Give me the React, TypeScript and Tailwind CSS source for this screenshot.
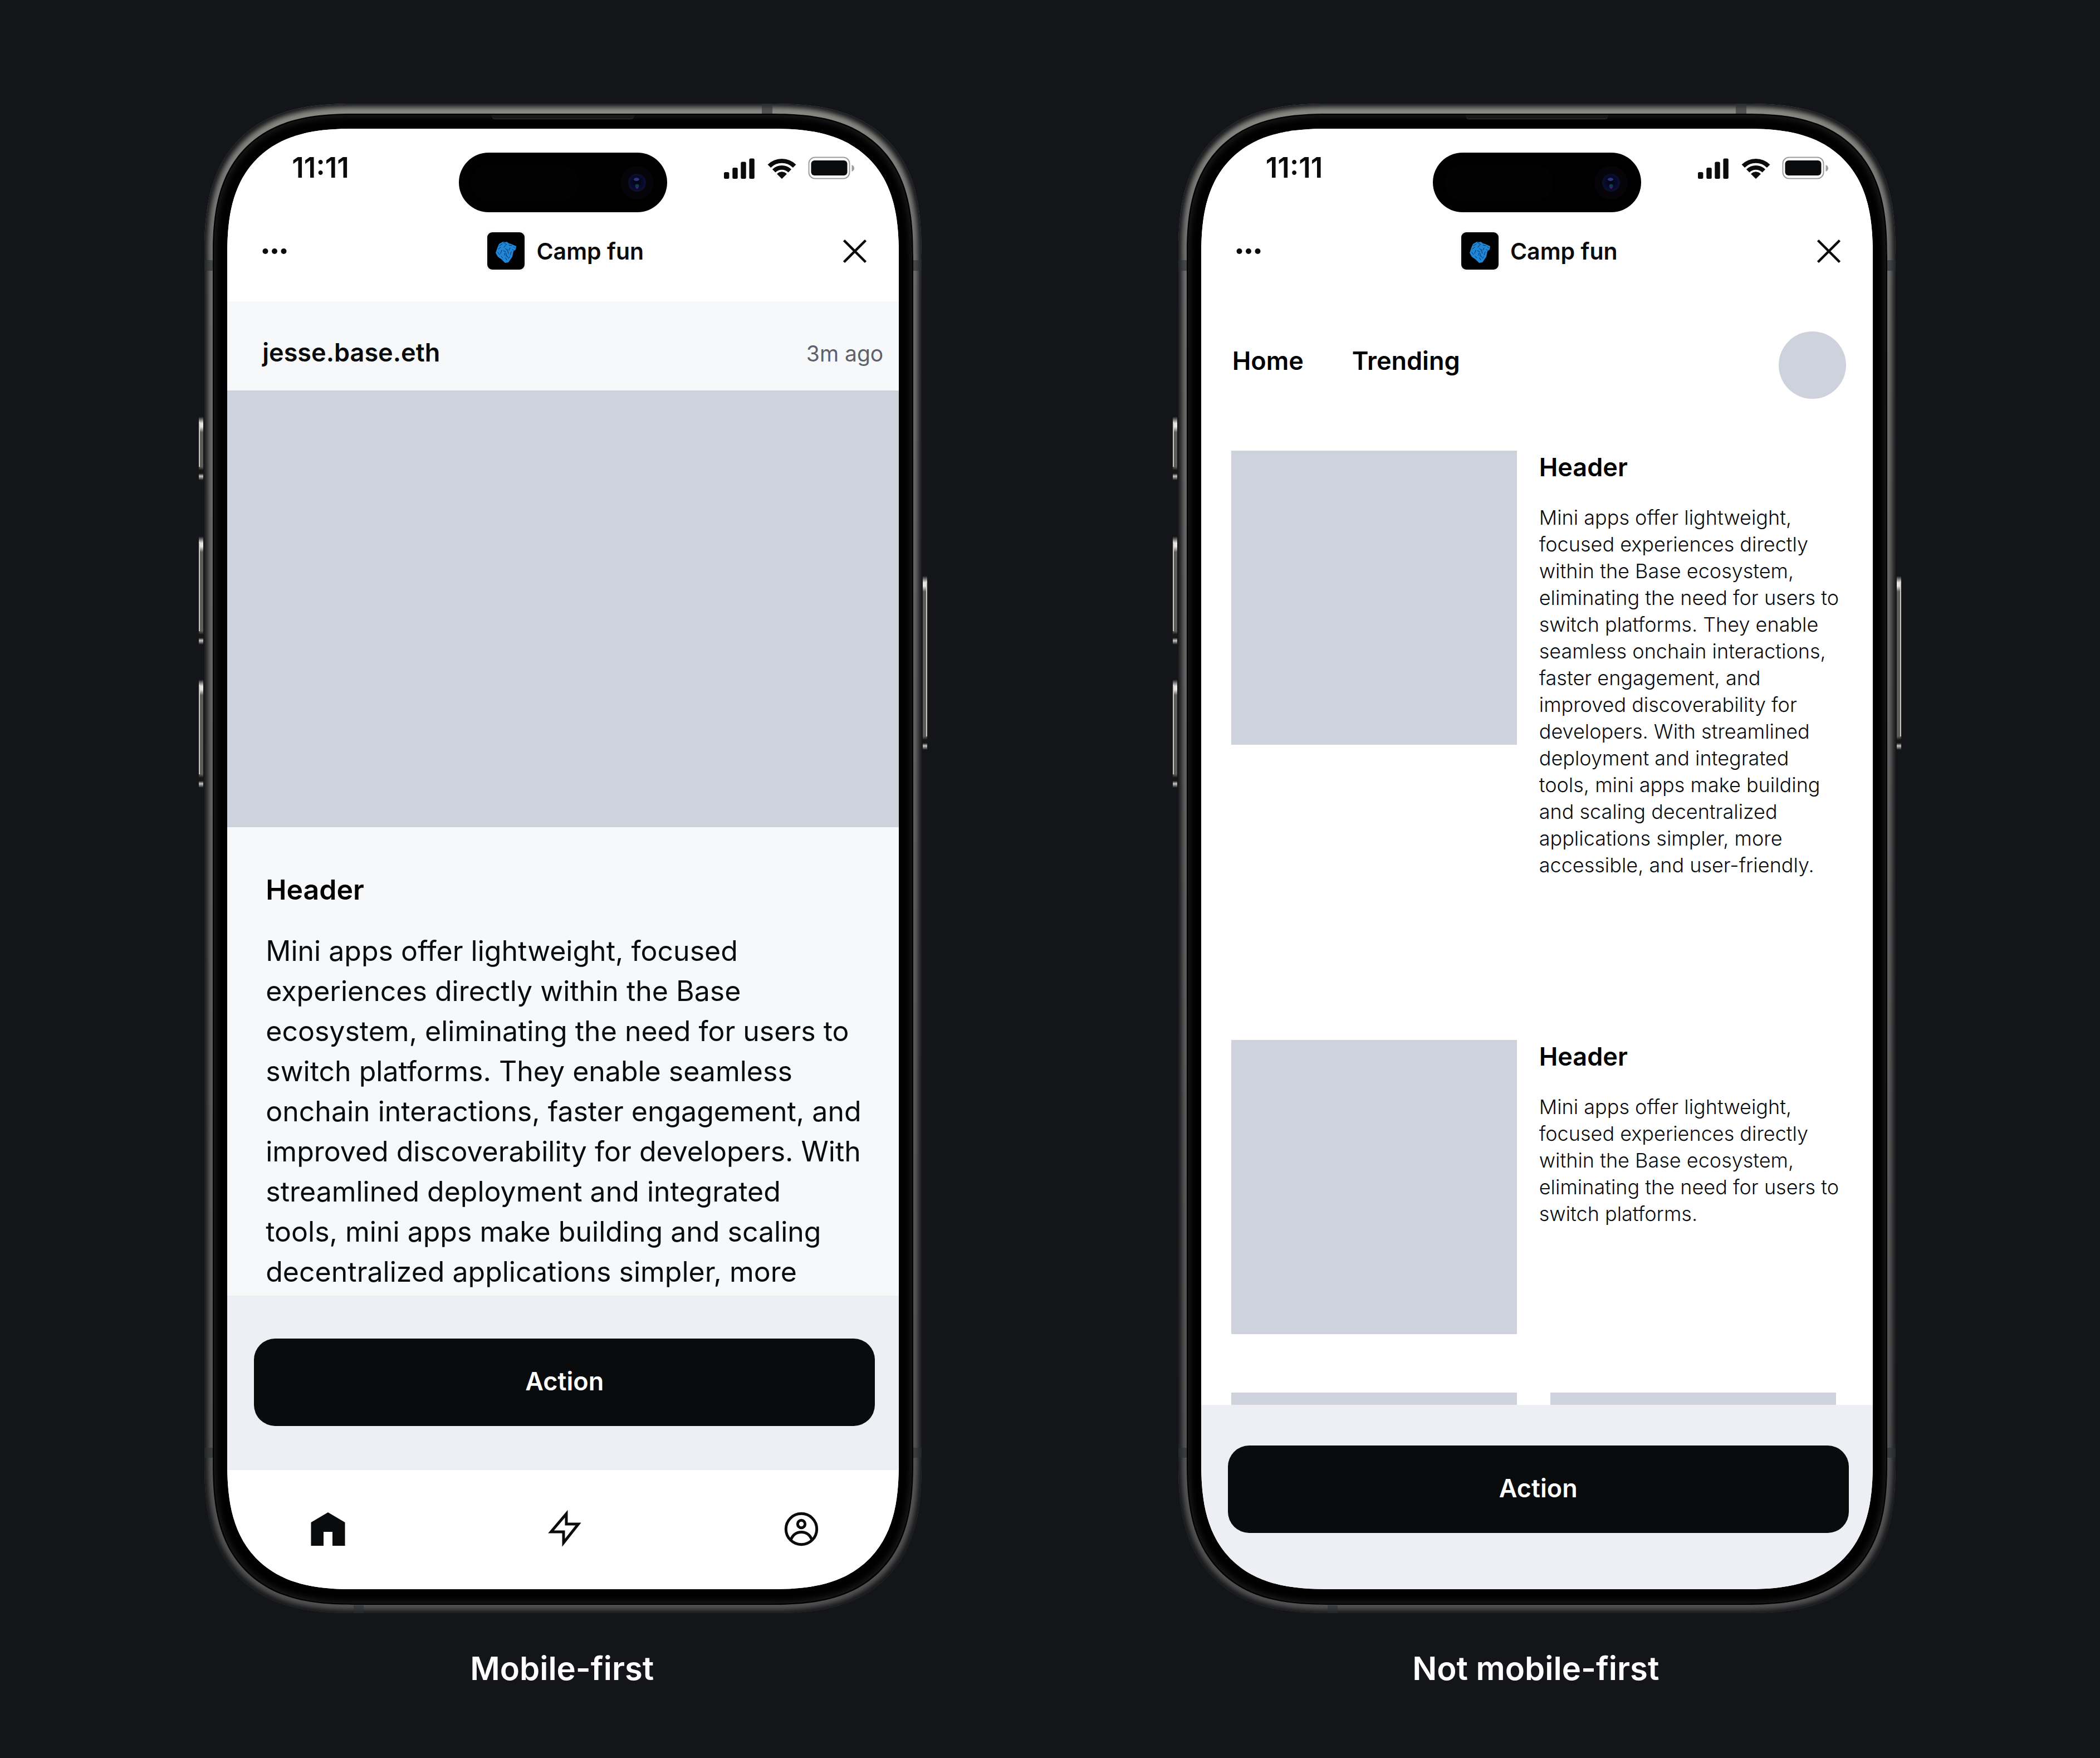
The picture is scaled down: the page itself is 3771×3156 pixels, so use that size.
import React from "react";

const ARTICLE =
  "Mini apps offer lightweight, focused experiences directly within the Base ecosystem, eliminating the need for users to switch platforms. They enable seamless onchain interactions, faster engagement, and improved discoverability for developers. With streamlined deployment and integrated\ntools, mini apps make building and scaling decentralized applications simpler, more";

const SHORT =
  "Mini apps offer lightweight, focused experiences directly within the Base ecosystem, eliminating the need for users to switch platforms.";

function StatusIcons() {
  return (
    <svg viewBox="0 0 234 42" className="h-[42px] w-[234px]" aria-hidden="true">
      <g fill="#0a0b0d">
        <rect x="0" y="28" width="9.4" height="12" rx="2.5" />
        <rect x="15.3" y="20" width="9.4" height="20" rx="2.5" />
        <rect x="30.3" y="9.5" width="9.4" height="30.5" rx="2.5" />
        <rect x="45.4" y="3.5" width="9.4" height="36.5" rx="2.5" />
        <path d="M104 39.600L95.600 31.200A12 12 0 0 1 112.400 31.200Z" stroke="#0a0b0d" strokeWidth="1" strokeLinejoin="round" />
        <rect x="156.500" y="7" width="65" height="27" rx="6" />
      </g>
      <g fill="none" stroke="#0a0b0d" strokeWidth="7.800">
        <path d="M81.300 17.300A32 32 0 0 1 126.700 17.300" />
        <path d="M89.700 25.700A20.300 20.300 0 0 1 118.300 25.700" />
      </g>
      <rect x="152.500" y="1.500" width="73" height="38" rx="11" fill="none" stroke="#0a0b0d" strokeOpacity=".4" strokeWidth="2" />
      <path d="M229.500 15v12c2.700-1 4.500-3.300 4.500-6s-1.800-5-4.500-6z" fill="#0a0b0d" fillOpacity=".4" />
    </svg>
  );
}

function CampLogo() {
  return (
    <svg viewBox="0 0 73 73" className="size-[73px]" aria-hidden="true">
      <rect width="73" height="73" rx="12" fill="#f5f6f8" />
      <rect x="3" y="3" width="67" height="67" rx="9" fill="#000" />
      <path d="M24 24l7-4 4 1 3-1 4 3 4 1 9 4-1 6-4 3-2 10-7 10-6 1-6-6-7-5-4-7 3-9z" fill="#1f86d8" />
      <g fill="none" stroke="#063055" strokeWidth="1" strokeLinecap="round">
        <path d="M25 27l5-3M23 33l4-3M22 39l3 4M29 35l-2 6M28 46l3 3M34 23l4 2M42 26l5 1" />
        <path d="M33 30l3-4M32 36l4 2M35 40l-1 4M39 34l2 7M38 45l2 3M44 31l-2 4M46 38l-2 6M36 49l2 4M41 50l2-3" />
        <path d="M50 29l2 2M48 34l2 1M37 41v5M36 32l2 3M35 20l-3 2" />
      </g>
    </svg>
  );
}

function HomeIcon() {
  return (
    <svg viewBox="0 0 72 72" className="size-[72px]" aria-hidden="true">
      <path d="M36 6l30.500 18v42H44V41H28v25H5.500V24z" fill="#0a0b0d" />
    </svg>
  );
}

function BoltIcon() {
  return (
    <svg viewBox="0 0 72 72" className="size-[72px]" aria-hidden="true">
      <path d="M39 8.500V27H60.500L34 60.500V41H11.500z" fill="none" stroke="#0a0b0d" strokeWidth="5" strokeMiterlimit="10" />
    </svg>
  );
}

function ProfileIcon() {
  return (
    <svg viewBox="0 0 72 72" className="size-[72px]" aria-hidden="true">
      <g fill="none" stroke="#0a0b0d" strokeWidth="5">
        <circle cx="36" cy="36" r="27.700" />
        <circle cx="36" cy="27" r="6.700" />
        <path d="M17 55.500c3.500-9 10.500-14 19-14s15.500 5 19 14" />
      </g>
    </svg>
  );
}

function DynamicIsland() {
  return (
    <div className="flex h-[107px] w-[374px] items-center justify-between rounded-full bg-black pr-6 pl-5">
      <div className="h-[66px] w-[196px] rounded-full bg-[#020202]" />
      <svg viewBox="0 0 60 60" className="size-[60px]" aria-hidden="true">
        <defs>
          <radialGradient id="lens" cx="50%" cy="45%" r="55%">
            <stop offset="0" stopColor="#02030c" />
            <stop offset=".6" stopColor="#07092c" />
            <stop offset="1" stopColor="#0d1230" />
          </radialGradient>
        </defs>
        <circle cx="30" cy="30" r="30" fill="#060408" />
        <circle cx="30" cy="30" r="16" fill="url(#lens)" />
        <ellipse cx="29" cy="24" rx="5" ry="3" fill="#30347a" />
        <circle cx="30" cy="36" r="3.500" fill="#0c3e4c" />
        <circle cx="30" cy="39" r="2" fill="#4a1d6a" />
      </svg>
    </div>
  );
}

function AppHeader() {
  return (
    <header className="bg-white pb-[54px]">
      <div className="grid grid-cols-[1fr_auto_1fr] items-start px-20 pt-[43px]">
        <time className="pl-9 text-[51px] leading-[54px] font-semibold text-[#0a0b0d]">11:11</time>
        <DynamicIsland />
        <div className="flex justify-end pt-[7px]">
          <StatusIcons />
        </div>
      </div>
      <div className="mt-[33px] grid grid-cols-[1fr_auto_1fr] items-center pr-[57px] pl-[55px]">
        <button type="button" aria-label="More options" className="justify-self-start p-2">
          <svg viewBox="0 0 44 12" className="h-3 w-11" aria-hidden="true">
            <g fill="#0a0b0d">
              <circle cx="5.500" cy="6" r="5" />
              <circle cx="22" cy="6" r="5" />
              <circle cx="38.500" cy="6" r="5" />
            </g>
          </svg>
        </button>
        <div className="flex items-center gap-[18px] pl-2">
          <CampLogo />
          <span className="text-[41px] leading-[60px] font-semibold text-[#0a0b0d]">Camp fun</span>
        </div>
        <button type="button" aria-label="Close" className="justify-self-end">
          <svg viewBox="0 0 44 44" className="size-11" aria-hidden="true">
            <path d="M2.500 2.500l39 39M41.500 2.500l-39 39" stroke="#0a0b0d" strokeWidth="4.500" />
          </svg>
        </button>
      </div>
    </header>
  );
}

function ActionButton() {
  return (
    <button
      type="button"
      className="h-[157px] w-full rounded-[38px] bg-[#0a0b0d] pb-1 text-[45px] leading-[60px] font-semibold text-white"
    >
      Action
    </button>
  );
}

const SIDE_BUTTONS = [
  { place: "-left-2.5 top-[562px] h-[114px]", edge: "left-0" },
  { place: "-left-2.5 top-[777px] h-[194px]", edge: "left-0" },
  { place: "-left-2.5 top-[1034px] h-[194px]", edge: "left-0" },
  { place: "-right-2.5 top-[848px] h-[312px]", edge: "right-0" },
];

const ANTENNA_BANDS = [
  "left-0 top-[281px] h-[19px] w-[15px]",
  "right-0 top-[281px] h-[19px] w-[15px]",
  "left-0 bottom-[279px] h-[18px] w-[15px]",
  "right-0 bottom-[279px] h-[18px] w-[15px]",
  "right-[268px] top-0 h-[18px] w-[19px]",
  "left-[268px] bottom-0 h-[14px] w-[18px]",
];

function Phone({ label, children }: { label: string; children: React.ReactNode }) {
  return (
    <figure className="flex w-full max-w-[1288px] flex-col items-center">
      <div className="relative w-full">
        {SIDE_BUTTONS.map(({ place, edge }) => (
          <span
            key={place}
            className={`absolute w-2 bg-[linear-gradient(to_bottom,transparent,#e8e6e0_12px,#e8e6e0_18px,#5c5c59_28px,#5c5c59_calc(100%-24px),#161616_calc(100%-18px),#161616_calc(100%-12px),#c9c7c0_calc(100%-7px),transparent)] ${place}`}
          >
            <span className={`absolute top-3 bottom-6 w-0.5 bg-[#c9c7c0] ${edge}`} />
          </span>
        ))}
        <div className="relative rounded-[271px] bg-linear-to-b from-[#8a8984] via-[#70706f] via-10% to-[#525252] px-[15px] pt-[18px] pb-[15px] shadow-[inset_0_0_8px_6px_#17181a] [corner-shape:superellipse(1.38)]">
          {ANTENNA_BANDS.map((place) => (
            <span key={place} className={`absolute bg-[#2c2e31]/60 ${place}`} />
          ))}
          <div className="relative rounded-[256px] border-2 border-black bg-black px-6 pt-[25px] pb-[26px] shadow-[inset_0_0_14px_2px_#222222] [corner-shape:superellipse(1.38)]">
            <span className="absolute top-0 left-1/2 h-2 w-64 -translate-x-1/2 rounded-b-md border-b border-[#333] bg-[#191919]" />
            <div className="flex h-[2622px] flex-col overflow-hidden rounded-[230px] bg-white [corner-shape:superellipse(1.38)]">
              <AppHeader />
              {children}
            </div>
          </div>
        </div>
      </div>
      <figcaption className="mt-[59px] pr-1 text-[58px] leading-[80px] font-semibold text-white">{label}</figcaption>
    </figure>
  );
}

function MobileFirstScreen() {
  return (
    <>
      <main className="flex min-h-0 flex-1 flex-col overflow-hidden bg-[#f7f8fa]">
        <div className="flex items-baseline justify-between pt-[62px] pr-7 pb-9 pl-[63px] leading-[60px]">
          <span className="text-[45px] font-semibold text-[#0a0b0d]">jesse.base.eth</span>
          <span className="text-[39px] text-[#5b616e]">3m ago</span>
        </div>
        <div className="h-[784px] shrink-0 bg-[#ced2dc]" />
        <article className="pt-[82px] pr-12 pl-[69px]">
          <h2 className="text-[50px] leading-[60px] font-semibold text-black">Header</h2>
          <p className="mt-11 text-[50px] leading-[72px] whitespace-pre-line text-[#0a0b0d]">{ARTICLE}</p>
        </article>
      </main>
      <div className="bg-[#eeeff4] pt-[77px] pr-[43px] pb-[79px] pl-12">
        <ActionButton />
      </div>
      <nav className="flex items-start justify-between bg-white pt-[70px] pr-[139px] pb-[72px] pl-[145px]">
        <button type="button" aria-label="Home"><HomeIcon /></button>
        <button type="button" aria-label="Activity"><BoltIcon /></button>
        <button type="button" aria-label="Profile"><ProfileIcon /></button>
      </nav>
    </>
  );
}

function Post({ text }: { text: string }) {
  return (
    <article className="flex shrink-0 items-start gap-10">
      <div className="h-[528px] w-[513px] shrink-0 bg-[#ced2dc]" />
      <div className="min-w-0 flex-1">
        <h2 className="text-[45px] leading-[60px] font-semibold text-black">Header</h2>
        <p className="mt-9 text-[36px] leading-[48px] font-light whitespace-pre-line text-[#0a0b0d]">{text}</p>
      </div>
    </article>
  );
}

function DesktopScreen() {
  return (
    <>
      <main className="flex min-h-0 flex-1 flex-col overflow-hidden bg-white pt-[54px] pr-12 pl-[54px]">
        <nav className="flex items-center justify-between text-[45px] leading-[60px] font-semibold text-black">
          <div className="flex gap-[87px] pb-4 pl-0.5">
            <a href="#home">Home</a>
            <a href="#trending">Trending</a>
          </div>
          <span className="size-[121px] rounded-full bg-[#ced2dc]" />
        </nav>
        <div className="mt-[93px] grid shrink-0 grid-rows-[1058px_633px_528px]">
          <Post text={`${ARTICLE} accessible, and user-friendly.`} />
          <Post text={SHORT} />
          <div className="flex gap-[60px]">
            <div className="w-[513px] bg-[#ced2dc]" />
            <div className="w-[513px] bg-[#ced2dc]" />
          </div>
        </div>
      </main>
      <div className="bg-[#eeeff4] pt-[73px] pr-[43px] pb-[101px] pl-12">
        <ActionButton />
      </div>
    </>
  );
}

export default function App() {
  return (
    <div className="min-h-screen bg-[#141519] px-[137px] pt-[186px] pb-[100px] font-['Inter',sans-serif]">
      <div className="grid grid-cols-2 justify-items-center">
        <Phone label="Mobile-first">
          <MobileFirstScreen />
        </Phone>
        <Phone label="Not mobile-first">
          <DesktopScreen />
        </Phone>
      </div>
    </div>
  );
}
